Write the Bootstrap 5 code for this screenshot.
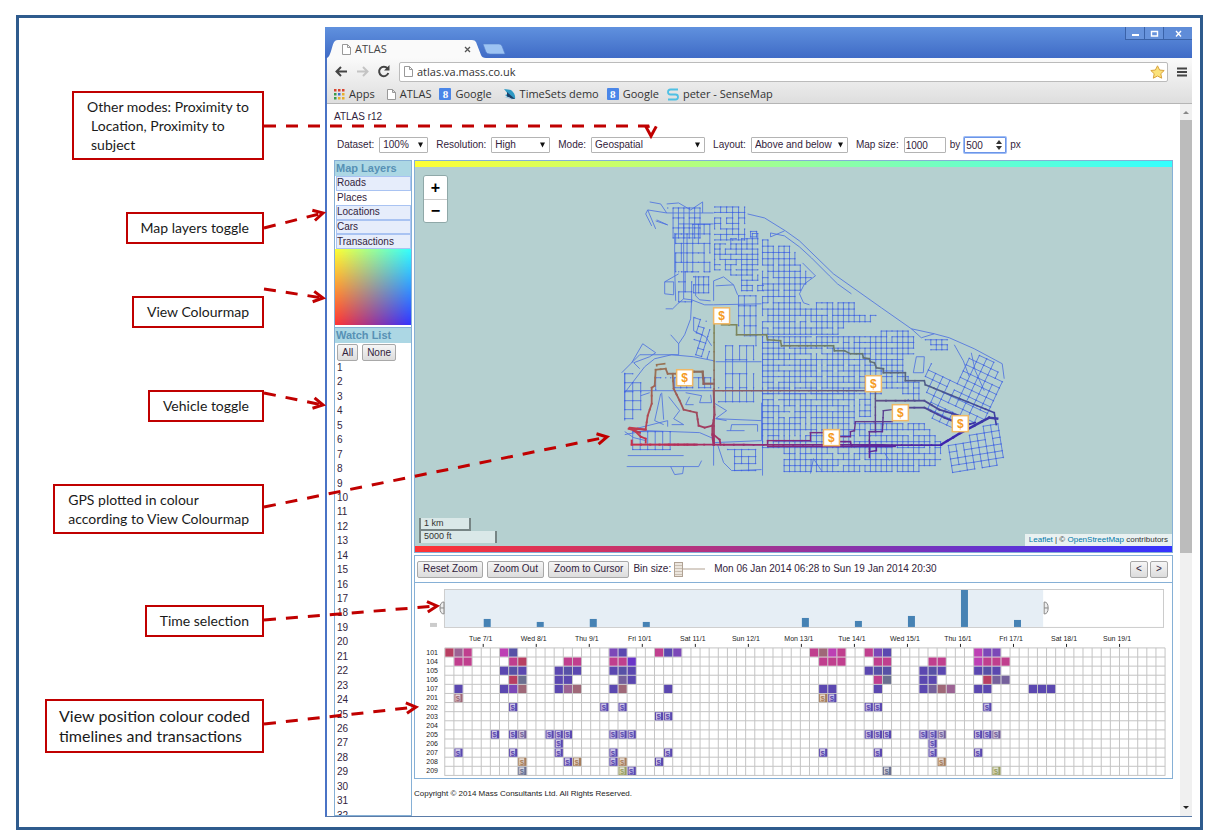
<!DOCTYPE html>
<html lang="en">
<head>
<meta charset="utf-8">
<meta name="viewport" content="width=device-width, initial-scale=1">
<title>ATLAS annotated overview</title>
<link href="https://cdn.jsdelivr.net/npm/bootstrap@5.3.0/dist/css/bootstrap.min.css" rel="stylesheet">
<style>
  body { background: #fff; font-family: "Liberation Sans", Arial, sans-serif; color: #222; }
  .frame { margin: 15px 6px 7px 16px; min-height: calc(100vh - 22px); border: 3px solid #2f5b8d; padding: 9px 8px 10px 0; }
  .notes { width: 245px; flex: none; margin-right: 61px; padding-top: 64px; font: 14px/19px Lato, sans-serif; color: #1a1a1a; }
  .note { border: 2px solid #c00000; padding: 4px 13px; min-height: 32px; white-space: nowrap; }
  .note span { display: block; padding-left: 4px; }
  .note-wide { font-size: 16px; line-height: 20px; padding: 5px 12px; }
  .note-one { line-height: 20px; }
  .gap-s { margin-top: 52px; } .gap-m { margin-top: 62px; } .gap-l { margin-top: 71px; }
  .arrows { left: -19px; top: -18px; pointer-events: none; z-index: 5; }

  .browser { min-width: 0; border-left: 2px solid #4a73c5; border-bottom: 1px solid #5b7ca8; position: relative; }
  .titlebar { height: 31px; background: linear-gradient(#6091de, #3f6bc6); padding-top: 13px; margin-left: -2px; }
  .tab-shape { width: 161px; height: 18px; position: relative; font: 11px/18px "Open Sans", sans-serif; color: #444; padding: 0 15px 0 17px; }
  .tab-shape > svg.tab-bg { position: absolute; left: 0; top: 0; }
  .win-btns { position: absolute; right: 0; top: 0; }
  .win-btns button { height: 13px; width: 19px; border: 1px solid #3a62a8; border-top: 0; border-right: 0; background: #6793dc; }
  .win-btns button:last-child { width: 29px; background: #5f8cd8; }
  button { padding: 0; }
  .chrome { background: linear-gradient(#fafafa, #dedede); border-bottom: 1px solid #b5b5b5; height: 46px; font: 11px/18px "Open Sans", sans-serif; color: #333; }
  .navrow { height: 27px; padding: 0 4px 0 8px; }
  .navrow button, .tab-shape button { background: none; border: 0; line-height: 12px; display: flex; }
  .address { height: 20px; border: 1px solid #bbb; border-radius: 2px; background: #fff; }
  .address input { border: 0; outline: 0; background: none; font: inherit; color: #333; padding: 0; min-width: 0; }
  .marks { height: 18px; padding-left: 7px; }
  .marks a { color: #333; text-decoration: none; display: flex; align-items: center; white-space: nowrap; }
  .g8 { width: 12px; height: 12px; background: #4a86e8; color: #fff; font: bold 11px/12px "Liberation Serif", serif; text-align: center; border-radius: 1px; }

  .viewport { flex: 1 1 0; min-height: 0; overflow: hidden; }
  .page { min-width: 0; padding: 7px 7px 0 7px; font-size: 10px; line-height: 12px; color: #32233c; overflow: hidden; }
  .page h1 { font-size: 10px; line-height: 12px; margin: 0 0 14px; font-weight: 400; }
  .opts { height: 16px; margin: 0 0 7px 3px; white-space: nowrap; }
  .opts .form-select, .opts .form-control { font-size: 10px; line-height: 12px; padding: 0 3px; height: 16px; min-height: 0; border-radius: 1px; border-color: #b4b4b4; color: #32233c; flex: none; }
  .opts .form-control { padding: 0 1px; }
  .opts .form-select { background: #fff url("data:image/svg+xml,%3Csvg xmlns='http://www.w3.org/2000/svg' viewBox='0 0 6 6'%3E%3Cpath d='M0 0h6L3 6z' fill='%23111'/%3E%3C/svg%3E") no-repeat right 4px center / 5px 6px; }
  .opts label { margin-right: 5px; }
  .w-a { width: 49px; } .w-b { width: 59px; } .w-c { width: 114px; } .w-d { width: 97px; } .w-e { width: 42px; }
  .opts .focused { border-color: #6c95e8; box-shadow: 0 0 0 1px #9dbcf5; }
  .sizer { position: absolute; right: 4px; top: 3px; }

  .side { width: 78px; flex: none; border: 1px solid #86b0d6; margin-right: 2px; height: 656px; overflow: hidden; background: #fff; }
  .side > * { flex: none; }
  .side h2 { margin: 0; background: #acd7e4; color: #5791b5; font-size: 11px; line-height: 15px; font-weight: 700; padding-left: 1px; }
  .side .second { margin-top: 2px; border-top: 1px solid #86b0d6; }
  .layers { height: 73px; padding: 0 0 0 1px; }
  .layers li { flex: 1; line-height: 12px; border: 1px solid transparent; display: flex; align-items: center; }
  .layers .on { background: #e6edfb; border-color: #a9c3f2; }
  .colourmap { width: 100%; height: 76px; display: block; }
  .btn-old { border: 1px solid #a8a8a8; border-radius: 2px; background: linear-gradient(#f6f6f6, #dcdcdc); color: #32233c; font-size: 10px; line-height: 12px; height: 17px; padding: 0 5px; }
  .picks { padding: 1px 0 0 2px; }
  .picks .btn-old { padding: 0 4px; }
  .watch { height: 462px; padding: 0 0 0 2px; }
  .watch li { flex: 1; line-height: 14px; }

  .boxed { border: 1px solid #86b0d6; }
  .band { height: 6px; }
  .band-top { background: linear-gradient(90deg, #ffff33, #99ff99 50%, #33ffff); }
  .band-bot { background: linear-gradient(90deg, #ff3333, #993399 50%, #3333ff); }
  .map { position: relative; background: #b5d0d0; }
  .map > svg, .tl svg { display: block; width: 100%; height: auto; }
  .zoomer { position: absolute; left: 8px; top: 8px; width: 25px; border: 1px solid #8fa8a8; border-radius: 3px; overflow: hidden; }
  .zoomer button { display: block; width: 100%; height: 23px; border: 0; background: #fff; color: #000; font: bold 16px/22px "Liberation Sans", sans-serif; }
  .zoomer button + button { border-top: 1px solid #ccc; }
  .scale { position: absolute; left: 4px; bottom: 3px; font-size: 9px; line-height: 11px; color: #333; }
  .scale div { border: 2px solid #778585; border-top: 0; background: rgba(255,255,255,.5); padding-left: 3px; height: 13px; }
  .scale .km { width: 52px; } .scale .ft { width: 78px; border-bottom: 0; height: 12px; }
  .attrib { position: absolute; right: 0; bottom: 0; background: rgba(255,255,255,.7); font-size: 8px; line-height: 12px; padding: 0 4px; color: #333; }
  .attrib a { color: #0078a8; text-decoration: none; }
  .tools { margin-top: 2px; height: 28px; padding: 0 4px 0 2px; white-space: nowrap; }
  .tools .step { width: 18px; padding: 0; margin-left: -2px; }
  .bin { appearance: none; width: 31px; height: 15px; background: linear-gradient(#d8d0c8, #d8d0c8) no-repeat center / 100% 2px; margin: 0 5px 0 -1px; }
  .bin::-webkit-slider-thumb { appearance: none; width: 9px; height: 15px; border: 1px solid #b0a294; background: repeating-linear-gradient(#ece6de 0 2px, #c9bfb3 2px 3px); }
  .copy { font-size: 8px; line-height: 10px; margin-top: 10px; color: #222; }
  .scrollbar-v { width: 12px; flex: none; background: #f0f0f0; }
  .thumb { height: 433px; background: #bcbcbc; }
  .sb-end { height: 16px; }
</style>
</head>
<body>
<div class="frame position-relative d-flex">
  <aside class="notes d-flex flex-column align-items-end">
    <div class="note">Other modes: Proximity to<span>Location, Proximity to</span><span>subject</span></div>
    <div class="note note-one gap-s">Map layers toggle</div>
    <div class="note note-one gap-s">View Colourmap</div>
    <div class="note note-one gap-m">Vehicle toggle</div>
    <div class="note gap-m">GPS plotted in colour<br>according to View Colourmap</div>
    <div class="note note-one gap-l">Time selection</div>
    <div class="note note-wide gap-m">View position colour coded<br>timelines and transactions</div>
  </aside>

  <main class="browser flex-grow-1 d-flex flex-column">
    <div class="titlebar d-flex">
      <div class="tab-shape d-flex align-items-center">
        <svg class="tab-bg" width="182" height="18" viewBox="0 0 182 18"><path d="M2 18C6 17 7 3 10 1Q11 0 13 0H147Q150 0 151 2L156 15Q157 18 161 18Z" fill="#fafafa"/><path d="M158 4H174Q176 4 177 6L180 14H165Q162 14 161 12Z" fill="#9cc3f3" stroke="#5580cc" stroke-width=".6"/></svg>
        <svg class="position-relative" width="9" height="11" viewBox="0 0 9 11"><path d="M.5.5H5.5L8.5 3.5V10.5H.5ZM5.5.5V3.5H8.500" fill="#fff" stroke="#999"/></svg>
        <span class="position-relative ms-1">ATLAS</span>
        <button class="position-relative ms-auto" aria-label="Close tab"><svg width="7" height="7" viewBox="0 0 7 7"><path d="M1 1L6 6M6 1L1 6" stroke="#555" stroke-width="1.300"/></svg></button>
      </div>
      <div class="win-btns d-flex">
        <button aria-label="Minimise"><svg class="d-block mx-auto" width="9" height="9" viewBox="0 0 9 9"><rect x="1" y="5" width="7" height="2" fill="#fff"/></svg></button>
        <button aria-label="Maximise"><svg class="d-block mx-auto" width="9" height="9" viewBox="0 0 9 9"><path d="M1.500 2.500H7.500V7H1.500Z" fill="none" stroke="#fff" stroke-width="1.400"/></svg></button>
        <button aria-label="Close window"><svg class="d-block mx-auto" width="9" height="9" viewBox="0 0 9 9"><path d="M2 2L7 7.500M7 2L2 7.500" stroke="#fff" stroke-width="1.400"/></svg></button>
      </div>
    </div>

    <div class="chrome">
      <div class="navrow d-flex align-items-center">
        <button aria-label="Back"><svg width="13" height="11" viewBox="0 0 13 11"><path d="M6 1L1.500 5.500L6 10M2 5.500H12" fill="none" stroke="#444" stroke-width="2"/></svg></button>
        <button class="ms-2" aria-label="Forward"><svg width="13" height="11" viewBox="0 0 13 11"><path d="M7 1L11.500 5.500L7 10M1 5.500H11" fill="none" stroke="#c4c4c4" stroke-width="2"/></svg></button>
        <button class="ms-2 me-2" aria-label="Reload"><svg width="14" height="13" viewBox="0 0 14 13"><path d="M10.500 3.500A4.700 4.700 0 1 0 11.300 8" fill="none" stroke="#444" stroke-width="2"/><path d="M12.500 0V5.500H7Z" fill="#444"/></svg></button>
        <div class="address d-flex align-items-center flex-grow-1 ps-1">
          <svg width="9" height="11" viewBox="0 0 9 11" class="me-1"><path d="M.5.5H5.500L8.500 3.500V10.500H.5ZM5.500.5V3.500H8.500" fill="#fff" stroke="#999"/></svg>
          <input class="flex-grow-1" aria-label="Address" value="atlas.va.mass.co.uk">
          <svg width="17" height="14" viewBox="0 0 17 14"><path d="M7.500.8L9.600 5L14.200 5.500L10.800 8.700L11.700 13.200L7.500 11L3.300 13.200L4.200 8.700L.8 5.500L5.400 5Z" fill="#fbe27a" stroke="#d9a23c"/></svg>
        </div>
        <button class="ms-2" aria-label="Menu"><svg width="12" height="10" viewBox="0 0 12 10"><path d="M1 1.500H11M1 5H11M1 8.500H11" stroke="#444" stroke-width="2"/></svg></button>
      </div>
      <nav class="marks d-flex align-items-center">
        <a href="#" class="me-2"><svg width="11" height="11" viewBox="0 0 11 11" class="me-1"><path d="M0 0h2.500v2.500H0zM4 0h2.500v2.500H4zM8 0h2.500v2.500H8z" fill="#d9432f"/><path d="M0 4h2.500v2.500H0z" fill="#3a9a4a"/><path d="M4 4h2.500v2.500H4z" fill="#3f6fd0"/><path d="M8 4h2.500v2.500H8zM4 8h2.500v2.500H4zM8 8h2.500v2.500H8z" fill="#e8ae2c"/><path d="M0 8h2.500v2.500H0z" fill="#3a9a4a"/></svg>Apps</a>
        <a href="#" class="ms-1 me-2"><svg width="9" height="11" viewBox="0 0 9 11" class="me-1"><path d="M.5.5H5.500L8.500 3.500V10.500H.5ZM5.500.5V3.500H8.500" fill="#fff" stroke="#999"/></svg>ATLAS</a>
        <a href="#" class="me-2"><span class="g8 me-1">8</span>Google</a>
        <a href="#" class="ms-1 me-2"><svg width="12" height="12" viewBox="0 0 12 12" class="me-1"><path d="M0 1L7 2Q12 6 11 11Q5 11 1 7L4 6Z" fill="#2f9ac4"/><path d="M3 4L11 11Q5 11 3 8Z" fill="#1d3f66"/><path d="M0 9L5 9L9 12Z" fill="#a9c7dd"/></svg>TimeSets demo</a>
        <a href="#" class="me-2"><span class="g8 me-1">8</span>Google</a>
        <a href="#"><svg width="12" height="13" viewBox="0 0 12 13" class="me-1"><path d="M11 1.500H3.500Q1 1.500 1 4T3.500 6.500H8.500Q11 6.500 11 9T8.500 11.500H1" fill="none" stroke="#4fc0e4" stroke-width="1.800"/></svg>peter - SenseMap</a>
      </nav>
    </div>

    <div class="viewport d-flex">
      <div class="page flex-grow-1">
        <h1>ATLAS r12</h1>
        <form class="opts d-flex align-items-center">
          <label for="ds">Dataset:</label><select id="ds" class="form-select w-a me-2"><option>100%</option></select>
          <label for="rs">Resolution:</label><select id="rs" class="form-select w-b me-2"><option>High</option></select>
          <label for="md">Mode:</label><select id="md" class="form-select w-c me-2"><option>Geospatial</option></select>
          <label for="ly">Layout:</label><select id="ly" class="form-select w-d me-2"><option>Above and below</option></select>
          <label for="mw">Map size:</label><input id="mw" class="form-control w-e me-1" value="1000">
          <label for="mh" class="me-1">by</label>
          <span class="position-relative"><input id="mh" class="form-control w-e focused" value="500"><svg class="sizer" width="6" height="10" viewBox="0 0 6 10"><path d="M0 4L3 0L6 4ZM0 6H6L3 10Z" fill="#333"/></svg></span>
          <span class="ms-1">px</span>
        </form>
        <div class="d-flex align-items-start">
          <section class="side d-flex flex-column">
            <h2>Map Layers</h2>
            <ul class="layers list-unstyled m-0 d-flex flex-column">
              <li class="on">Roads</li><li>Places</li><li class="on">Locations</li><li class="on">Cars</li><li class="on">Transactions</li>
            </ul>
            <svg class="colourmap" viewBox="0 0 76 76" preserveAspectRatio="none">
              <defs>
                <linearGradient id="cTop"><stop stop-color="#ffff33"/><stop offset="1" stop-color="#33ffff"/></linearGradient>
                <linearGradient id="cBot"><stop stop-color="#ff3333"/><stop offset="1" stop-color="#3333ff"/></linearGradient>
                <linearGradient id="cFade" x2="0" y2="1"><stop stop-color="#fff" stop-opacity="0"/><stop offset="1" stop-color="#fff"/></linearGradient>
                <mask id="cMask"><rect width="76" height="76" fill="url(#cFade)"/></mask>
              </defs>
              <rect width="76" height="76" fill="url(#cTop)"/><rect width="76" height="76" fill="url(#cBot)" mask="url(#cMask)"/>
            </svg>
            <h2 class="second">Watch List</h2>
            <div class="picks d-flex gap-1"><button class="btn-old">All</button><button class="btn-old">None</button></div>
            <ul class="watch list-unstyled m-0 d-flex flex-column" id="watch"></ul>
          </section>

          <div class="flex-grow-1">
            <section class="boxed">
              <div class="band band-top"></div>
              <div class="map">
                <svg id="map" viewBox="415 166 758 380" role="img" aria-label="Street map with vehicle tracks"></svg>
                <div class="zoomer"><button aria-label="Zoom in">+</button><button aria-label="Zoom out">−</button></div>
                <div class="scale"><div class="km">1 km</div><div class="ft">5000 ft</div></div>
                <div class="attrib"><a href="#">Leaflet</a> | © <a href="#">OpenStreetMap</a> contributors</div>
              </div>
              <div class="band band-bot"></div>
            </section>
            <div class="boxed tools d-flex align-items-center gap-1">
              <button class="btn-old">Reset Zoom</button><button class="btn-old">Zoom Out</button><button class="btn-old">Zoom to Cursor</button>
              <label for="bin">Bin size:</label><input class="bin" id="bin" type="range" value="0">
              <span>Mon 06 Jan 2014 06:28 to Sun 19 Jan 2014 20:30</span>
              <button class="btn-old step ms-auto">&lt;</button><button class="btn-old step">&gt;</button>
            </div>
            <section class="boxed border-top-0 tl"><svg id="timeline" viewBox="415 583 758 195" role="img" aria-label="Vehicle timelines"></svg></section>
            <p class="copy mb-0">Copyright © 2014 Mass Consultants Ltd. All Rights Reserved.</p>
          </div>
        </div>
      </div>
      <div class="scrollbar-v d-flex flex-column">
        <svg class="sb-end" viewBox="0 0 12 16"><path d="M3 10L6 7L9 10Z" fill="#888"/></svg>
        <div class="thumb"></div>
        <svg class="sb-end mt-auto" viewBox="0 0 12 16"><path d="M3 6H9L6 9Z" fill="#222"/></svg>
      </div>
    </div>
  </main>

  <svg class="arrows position-absolute" width="680" height="780" viewBox="0 0 680 780" aria-hidden="true">
    <g id="arrows" fill="none" stroke="#c00000" stroke-width="3"></g>
  </svg>
</div>

<script src="https://cdn.jsdelivr.net/npm/bootstrap@5.3.0/dist/js/bootstrap.bundle.min.js"></script>
<script>
  // Watch list of vehicle numbers
  document.getElementById('watch').innerHTML = Array.from({ length: 32 }, (_, i) => `<li>${i + 1}</li>`).join('');

  // Callout arrows: dashed shaft and an open head
  const arrows = [[[264,126],[648,126],[651,136]], [[264,228],[323,213]], [[264,289],[323,298]], [[264,393],[323,405]],
    [[264,507],[607,437]], [[264,620],[437,606]], [[264,724],[416,707]]];
  document.getElementById('arrows').innerHTML = arrows.map(p => {
    const [a, b] = p.slice(-2), t = p.length > 2 ? Math.PI / 2 : Math.atan2(b[1] - a[1], b[0] - a[0]);
    const leg = s => [b[0] - 11 * Math.cos(t + s), b[1] - 11 * Math.sin(t + s)].join(' ');
    return `<path stroke-dasharray="12 10" d="M${p.join('L')}"/><path d="M${leg(.5)}L${b}L${leg(-.5)}"/>`;
  }).join('');

  // Street network: grids clipped to districts, then single streets
  let seed = 7;
  const rnd = () => (seed = (seed * 16807) % 2147483647) / 2147483647;
  const inside = (x, y, p) => {
    let r = false;
    for (let i = 0, j = p.length - 1; i < p.length; j = i++)
      if ((p[i][1] > y) !== (p[j][1] > y) && x < (p[j][0] - p[i][0]) * (y - p[i][1]) / (p[j][1] - p[i][1]) + p[i][0]) r = !r;
    return r;
  };
  const districts = [
    [[[667,206],[704,206],[704,238],[670,238]], 0, 5.4, 10, .12],
    [[[675,232],[715,212],[715,272],[675,272]], 0, 5.7, 9.5, .2],
    [[[678,270],[693,270],[693,302],[678,302]], 0, 6.5, 10, .25],
    [[[714,205],[749,206],[749,242],[714,242]], 0, 6, 5.5, .25],
    [[[714,242],[762,230],[764,294],[738,294],[738,276],[714,272]], 0, 5.4, 5.2, .18],
    [[[762,224],[762,240],[748,240],[748,228]], 0, 6, 5.5, .3],
    [[[738,294],[762,294],[762,350],[738,330]], 0, 5.8, 10, .1],
    [[[762,238],[785,240],[795,250],[803,262],[813,275],[802,290],[800,298],[804,303],[836,299],[855,300],[856,312],[878,310],[877,318],[866,324],[846,326],[836,337],[762,337]], 0, 5.4, 6.3, .08],
    [[[762,335],[870,336],[880,328],[898,325],[918,334],[918,354],[905,358],[905,372],[923,382],[925,405],[906,400],[895,390],[874,398],[874,420],[855,420],[855,395],[762,395]], 0, 5.4, 5.7, .1],
    [[[925,338],[950,334],[950,354],[930,352]], 0, 5.5, 5, .1],
    [[[762,392],[858,392],[858,418],[925,422],[945,440],[945,464],[920,468],[920,473],[780,473],[780,450],[762,450]], 0, 5.4, 6, .14],
    [[[931,362],[955,375],[970,352],[995,357],[1005,372],[1000,400],[990,415],[975,428],[948,430],[926,420],[926,375]], .44, 8, 7, .06],
    [[[948,444],[970,432],[1000,418],[1006,440],[1005,464],[985,473],[948,474]], -.16, 7.5, 6.8, .05],
    [[[725,344],[758,344],[758,405],[716,405],[716,384],[725,380]], 0, 7, 14, .12],
    [[[727,448],[762,448],[762,472],[732,472]], 0, 7, 7, .2],
    [[[693,275],[711,275],[711,300],[693,300]], 0, 5, 8, .35],
    [[[694,316],[711,316],[711,360],[694,360]], .3, 6, 7, .45],
    [[[632,430],[671,430],[671,467],[632,467]], 0, 7.5, 18, .05],
    [[[624,372],[640,372],[646,396],[640,420],[625,420]], 0, 8, 9, .3],
    [[[655,376],[672,372],[672,384],[655,390]], 0, 5, 12, .2],
    [[[674,376],[712,376],[712,388],[674,388]], 0, 6, 10, .25]
  ];
  let lines = '', dots = '';
  for (const [poly, ang, dx, dy, drop] of districts) {
    const ox = poly[0][0], oy = poly[0][1], c = Math.cos(ang), s = Math.sin(ang);
    const at = (i, j) => [ox + 1 + i * dx * c - j * dy * s, oy + 1 + i * dx * s + j * dy * c];
    for (let i = -40; i < 40; i++) for (let j = -40; j < 40; j++) {
      const p = at(i, j);
      if (!inside(...p, poly)) continue;
      const q = p.map(v => v.toFixed(1));
      dots += `M${q}h.1`;
      for (const n of [at(i + 1, j), at(i, j + 1)])
        if (inside(...n, poly) && rnd() > drop) lines += `M${q}L${n.map(v => v.toFixed(1))}`;
    }
  }
  const streets = ['650,201 661,203 667,212 648,209 646,213 652,225', '648,209 656,228', '667,203 679,202 691,209 703,201', '656,220 668,224 657,219', '667,212 714,212', '679,223 714,223', '703,201 703,212',
    '748,213 765,217 786,230 800,240 834,273 882,307 912,328 935,333 950,337 975,348 1003,363 1005,378', '771,232 771,236 785,230', '771,232 785,235 800,246 812,257 830,275 838,283 852,293',
    '803,262 816,275 805,283 800,293 804,302 810,304', '912,328 922,337 935,333', '684,222 684,298 678,303 673,308 666,308', '675,232 675,268 676,300', '679,273 665,281 665,293 674,294 674,281 665,281',
    '684,298 692,299 705,304 714,304 762,303', '692,299 691,318 685,334 679,343 671,334', '679,343 679,354 640,354 622,372', '625,392 645,366 655,358 672,354 694,356 714,360', '632,362 643,343 656,352 650,356 634,362 640,368',
    '694,316 694,330 706,336 712,345', '696,275 696,295 700,299 711,300', '661,393 655,420 664,424', '662,392 664,419', '636,428 668,420 668,426', '641,395 650,392', '669,396 680,410 674,418 684,424 672,424',
    '686,392 702,395 700,402 712,402 711,394', '690,396 686,404 694,404', '625,434 646,430 700,432 714,438', '625,431 634,437 646,440', '628,455 684,455', '627,466 699,466 702,460', '671,466 675,474 683,473 684,466', '714,444 714,465',
    '718,444 724,462 732,470 762,469', '731,430 732,424 758,424 758,431', '727,430 745,430', '763,335 763,475', '714,392 714,402 727,410 716,418 727,420', '716,418 762,420', '716,361 762,361', '914,372 917,356 925,356 924,372 914,372',
    '955,344 964,360 970,376', '972,352 976,370 985,390', '811,473 814,458 822,470', '885,452 890,460', '625,372 625,420', '714,300 714,280 724,276 734,284 716,285', '734,284 738,294', '762,402 762,440 714,442', '625,390 762,390'];
  const roads = streets.map(s => 'M' + s.split(' ').join('L')).join('');

  // Vehicle tracks, coloured by position
  const tracks = [
    ['722,324 737,324 737,334 767,334 768,339 781,340 782,345 834,345 835,350 845,350 851,353 863,353 864,357 870,358 871,361 875,362 877,367 884,368 884,372 906,372 906,380 925,380 926,384 995,412 997,424', 1.6],
    ['714.5,323 714.5,444', 1.5], ['714,390 876,390 876,431 870,431 870,457', 1.4],
    ['657,365 657,364 665,363', 1.6], ['714,383 704,383 703,371 685,371', 2.2], ['685,373 668,373 666,368 656,369 655,385 652,387 652,403 648,415 646,428', 1.8],
    ['630,427 646,429 629,428 640,432 635,430 641,436 646,438 646,442', 1.8], ['632,440 632,444 697,444', 2], ['665,444 942,444.5', 1.8], ['768,446 896,446', 1.2], ['942,444 960,433 990,417 998,418', 2.4],
    ['673,373 674,388 680,400 684,409 697,412 699,425 705,427 713,425 715,414 714,390', 1.8], ['713,425 713,434 714,444', 2.4], ['714,434 720,439 721,444', 1.8],
    ['768,444 768,440 811,440 811,432 824,432', 1.4], ['840,436 851,436 851,431 855,430 856,421 893,421', 1.4], ['840,441 851,441 852,446', 1.6], ['870,451 877,450 877,444', 1.4],
    ['877,400 925,400 940,409 960,415', 1.8], ['870,431 883,431 884,410 892,409', 1.4], ['905,407 925,407 945,417 965,425 976,422', 1.8]
  ];
  const corner = { tl: [145,138,80], tr: [80,130,120], bl: [200,48,75], br: [55,35,180] };
  const hue = (x, y) => {
    const u = Math.min(1, Math.max(0, (x - 630) / 330)), v = Math.min(1, Math.max(0, (y - 320) / 120)) ** 1.4;
    return 'rgb(' + [0, 1, 2].map(k => Math.round((corner.tl[k] * (1 - u) + corner.tr[k] * u) * (1 - v) + (corner.bl[k] * (1 - u) + corner.br[k] * u) * v)) + ')';
  };
  let trackSvg = '';
  for (const [pts, w] of tracks) {
    const p = pts.split(' ').map(s => s.split(',').map(Number));
    for (let i = 1; i < p.length; i++) {
      const [x0, y0] = p[i - 1], [x1, y1] = p[i], n = Math.ceil(Math.hypot(x1 - x0, y1 - y0) / 10);
      for (let k = 0; k < n; k++) {
        const f = t => [x0 + (x1 - x0) * t / n, y0 + (y1 - y0) * t / n];
        trackSvg += `<path stroke="${hue(...f(k))}" stroke-width="${w}" d="M${f(k)}L${f(k + 1)}"/>`;
      }
    }
  }
  const pins = [[722,315],[685,377],[874,383],[901,412],[832,437],[961,423]].map(([x, y]) =>
    `<rect x="${x - 8}" y="${y - 8}" width="16" height="16" fill="#fff" stroke="#f0b865" stroke-width="1.500"/><text x="${x}" y="${y + 4}" text-anchor="middle" font-size="12" font-weight="700" fill="#f59a22">$</text>`).join('');
  document.getElementById('map').innerHTML =
    `<g fill="none" stroke="#4a6ee0" stroke-width=".9"><path opacity=".9" d="${lines}"/><path opacity=".9" d="${roads}"/></g>
     <path d="${dots}" stroke="#3558e4" stroke-width="1.500" stroke-linecap="round" opacity=".65"/>
     <g fill="none" stroke-linecap="square">${trackSvg}</g>${pins}`;

  // Time selection and timelines
  const palette = { r: '#b83f62', m: '#c03f8e', p: '#bd40b4', v: '#7c48b8', b: '#5b48b0', s: '#5751a6', i: '#6a35c8', g: '#6b7090', n: '#9f6878', t: '#a87f5c', l: '#9a9f62', a: '#9c6394', u: '#75619c' };
  const X = c => 444.8 + c * 9.13, Y = r => 648 + r * 9.12;
  const rows = {
    101: '0r 1a 2m 6p 7s 18v 19b 23m 24b 25v 40m 41n 42p 43m 46m 47v 48b 58p 59v 60v',
    104: '1m 2m 7m 8r 13m 14m 18m 19m 20i 41m 42m 43m 47m 48m 53m 54m 58p 59m 60m 61m',
    105: '6b 7s 8b 12b 13s 14b 18b 19s 20b 46b 47s 48s 52b 53s 54b 58b 59s 60b',
    106: '7r 8g 12b 13b 19u 20b 47m 48g 52b 53b 59r 60u 61u',
    107: '1b 6b 7v 8n 12b 13a 14n 18b 19n 24b 41b 42b 47b 52b 53u 54n 55a 58b 59b 64b 65b 66b',
    201: '1n$ 41t$ 42b$', 202: '7b$ 17b$ 19b$ 46b$ 47b$ 59b$', 203: '23b$ 24b$', 204: '',
    205: '5b$ 7b$ 8u$ 11b$ 12b$ 13b$ 18b$ 19b$ 20b$ 46b$ 47b$ 48b$ 52b$ 53b$ 54u$ 58b$ 59b$ 60u$', 206: '12b$ 53b$',
    207: '1b$ 7b$ 12b$ 18b$ 24b$ 41b$ 47b$ 53b$ 58b$', 208: '8t$ 13b$ 14t$ 18b$ 19t$ 23b$ 54t$', 209: '8g$ 19l$ 20b$ 48g$ 60l$'
  };
  let t = `<rect x="444.500" y="589.500" width="720" height="38" fill="#fff" stroke="#ccc"/><rect x="445" y="590" width="599" height="37" fill="#e6eef5"/>
    <rect x="430" y="623" width="7" height="4" fill="#ccc"/>
    <path d="M444 602Q440 602 440 608T444 614ZM440 608H444M1045 602Q1049 602 1049 608T1045 614ZM1045 608H1049" fill="#eee" stroke="#888"/>`;
  const days = ['Tue 7/1','Wed 8/1','Thu 9/1','Fri 10/1','Sat 11/1','Sun 12/1','Mon 13/1','Tue 14/1','Wed 15/1','Thu 16/1','Fri 17/1','Sat 18/1','Sun 19/1'];
  const counts = [8, 5, 8, 5, 0, 0, 9, 6, 11, 37, 7, 0, 0];
  days.forEach((d, i) => {
    const x = 483.3 + i * 53.1;
    t += `<rect x="${x + .5}" y="${627 - counts[i]}" width="7" height="${counts[i]}" fill="#4682b4"/>
      <text x="${x - 2.5}" y="641" font-size="7" text-anchor="middle" fill="#222">${d}</text><path d="M${x} 644V647" stroke="#222"/>`;
  });
  let g = '';
  for (let c = 0; c <= 79; c++) g += `M${X(c)} 648V776`;
  for (let r = 0; r <= 14; r++) g += `M${X(0)} ${Y(r)}H${X(79)}`;
  t += `<path d="${g}" stroke="#c4c4c4"/>`;
  Object.keys(rows).forEach((id, r) => {
    t += `<text x="438" y="${Y(r) + 7}" font-size="7" text-anchor="end" fill="#222">${id}</text>`;
    rows[id].split(' ').filter(Boolean).forEach(cell => {
      const c = parseInt(cell), col = palette[cell.replace(/[\d$]/g, '')], money = cell.endsWith('$');
      t += `<rect x="${X(c) + .5}" y="${Y(r) + .5}" width="8.200" height="8.200" fill="${col}"/>`;
      if (money) t += `<rect x="${X(c) + 1.500}" y="${Y(r) + 1}" width="5" height="7" fill="#fff" opacity=".72"/><text x="${X(c) + 4.200}" y="${Y(r) + 7.500}" font-size="8" font-weight="700" text-anchor="middle" fill="${col}">$</text>`;
    });
  });
  document.getElementById('timeline').innerHTML = t;
</script>
</body>
</html>
